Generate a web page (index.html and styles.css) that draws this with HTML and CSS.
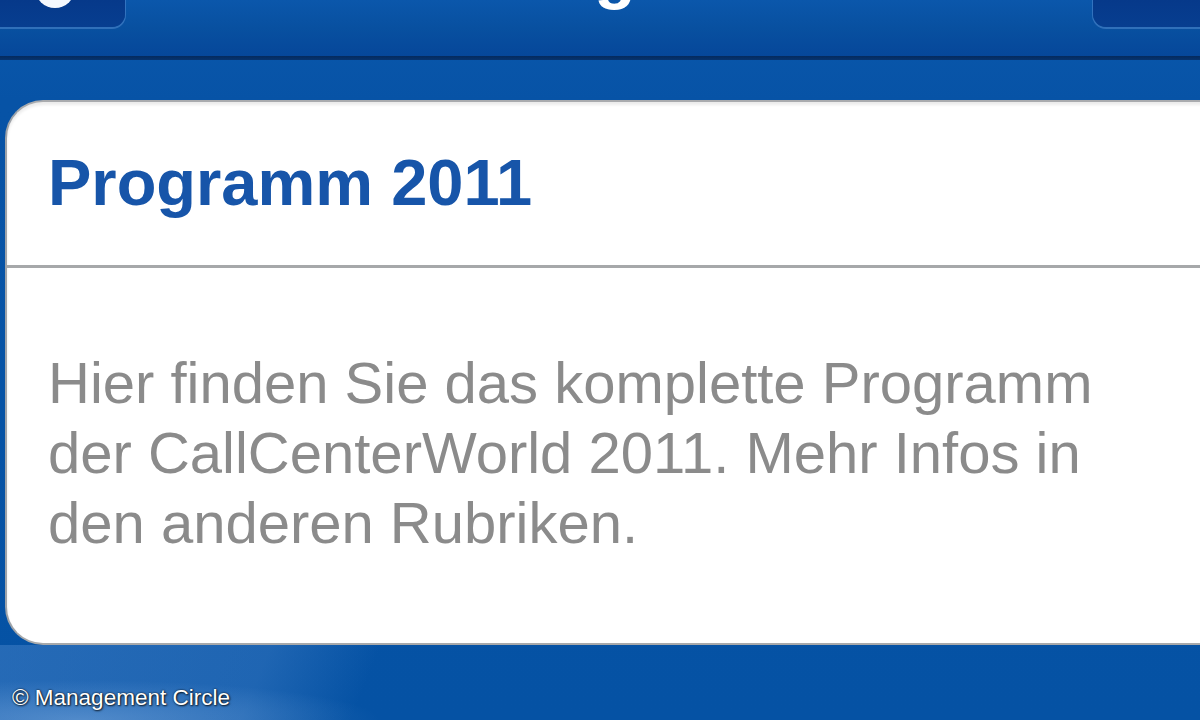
FILE: index.html
```html
<!DOCTYPE html>
<html lang="de">
<head>
<meta charset="utf-8">
<title>Programm 2011</title>
<link rel="stylesheet" href="styles.css">
</head>
<body>
<div class="screen">
  <header class="nav">
    <div class="nav-btn nav-btn-left"><span class="btn-icon"></span></div>
    <div class="nav-title">Programm</div>
    <div class="nav-btn nav-btn-right"></div>
  </header>
  <div class="nav-line"></div>
  <main class="content">
    <section class="card">
      <div class="card-head">
        <h1 class="card-title">Programm 2011</h1>
      </div>
      <div class="card-sep"></div>
      <div class="card-body">
        <p class="card-text">Hier finden Sie das komplette Programm der CallCenterWorld 2011. Mehr Infos in den anderen Rubriken.</p>
      </div>
    </section>
  </main>
  <div class="credit">© Management Circle</div>
</div>
</body>
</html>
```
FILE: styles.css
```css
html, body {
  margin: 0;
  padding: 0;
  width: 1200px;
  height: 720px;
  overflow: hidden;
}
body {
  font-family: "Liberation Sans", Arial, Helvetica, sans-serif;
  background: #0651a3;
}
.screen {
  position: relative;
  width: 1200px;
  height: 720px;
  overflow: hidden;
  background:
    radial-gradient(ellipse 300px 40px at 80px 75px, rgba(150, 190, 235, 0.4), rgba(150, 190, 235, 0) 100%) 0 645px / 1200px 75px no-repeat,
    linear-gradient(112deg, rgba(70, 130, 200, 0.5) 0, rgba(70, 130, 200, 0.4) 22%, rgba(70, 130, 200, 0) 31%) 0 645px / 1200px 75px no-repeat,
    linear-gradient(180deg, #0a58ad 0, #0753a6 100px, #0552a4 100%);
}
.nav {
  position: relative;
  height: 56px;
  display: flex;
  justify-content: space-between;
  align-items: flex-start;
  background: linear-gradient(180deg, #0b57ab 0%, #0850a0 50%, #06479a 100%);
}
.nav-btn {
  height: 27px;
  background: linear-gradient(180deg, #06398a 0%, #073e90 100%);
  box-shadow: 0 1px 0 1px rgba(110, 160, 225, 0.4);
  position: relative;
}
.nav-btn-left {
  width: 125px;
  border-radius: 0 0 13px 0;
}
.nav-btn-right {
  width: 107px;
  border-radius: 0 0 0 13px;
}
.btn-icon {
  position: absolute;
  left: 35px;
  top: -32px;
  width: 40px;
  height: 40px;
  border-radius: 50%;
  background: #f4f8fd;
}
.nav-title {
  position: absolute;
  left: 481px;
  top: -62px;
  font-size: 68px;
  line-height: 68px;
  font-weight: bold;
  color: #ffffff;
  white-space: nowrap;
}
.nav-line {
  height: 4px;
  background: linear-gradient(180deg, #042a5e, #06336f);
}
.content {
  padding: 40px 0 0 5px;
}
.card {
  width: 1250px;
  background: #ffffff;
  border-radius: 38px 0 0 38px;
  border-top: 2px solid #a9abae;
  border-left: 2px solid #9ea3a9;
  border-bottom: 2px solid #a7a9ab;
  box-sizing: border-box;
  box-shadow: inset 0 3px 3px rgba(0, 0, 0, 0.08);
}
.card-head {
  padding: 48px 0 50px 41px;
}
.card-title {
  margin: 0;
  font-size: 65px;
  line-height: 65px;
  font-weight: bold;
  color: #1755a9;
}
.card-sep {
  height: 3px;
  background: #a6a8aa;
}
.card-body {
  padding: 80px 0 85px 41px;
}
.card-text {
  margin: 0;
  width: 1100px;
  font-size: 58px;
  line-height: 70px;
  color: #8b8b8b;
}
.credit {
  position: absolute;
  left: 12px;
  top: 684px;
  font-size: 22.5px;
  line-height: 28px;
  color: #ffffff;
  text-shadow: 0 0 2px rgba(0, 0, 0, 0.9), 1px 1px 2px rgba(0, 0, 0, 0.7);
}
```
